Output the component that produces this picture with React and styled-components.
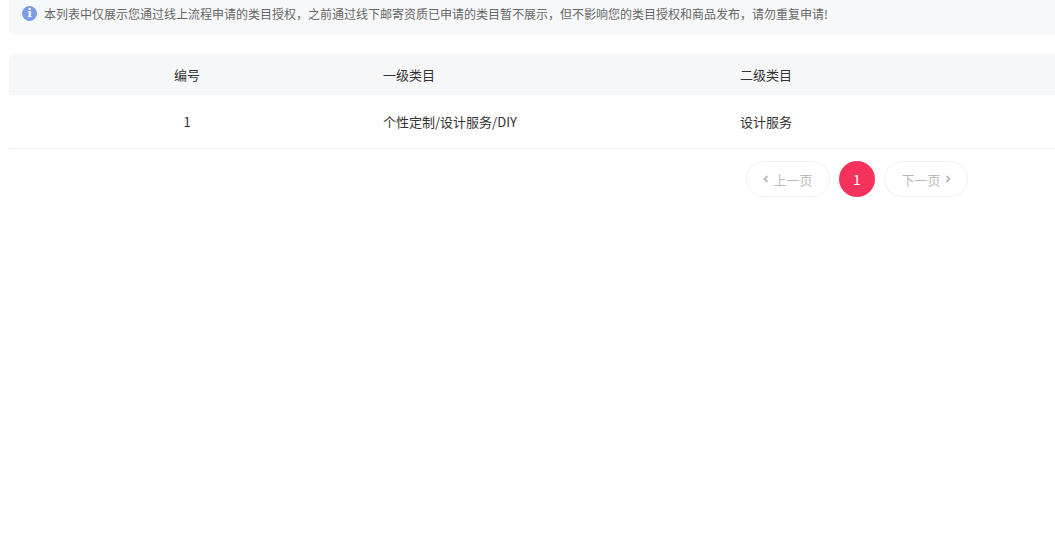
import React from "react";
import styled, { createGlobalStyle } from "styled-components";

const G = createGlobalStyle`
  body{margin:0;background:#fff;font-family:"Noto Sans CJK SC","Noto Sans",sans-serif;overflow:hidden;}
`;
const Page = styled.div`width:1055px;height:539px;padding-left:9px;box-sizing:border-box;overflow:hidden;`;
const Notice = styled.div`
  width:1060px;height:35px;background:#f7f8fa;border-radius:0 0 6px 6px;
  display:flex;align-items:flex-start;padding:6px 0 0 13px;box-sizing:border-box;
  font-size:12px;color:#666;gap:7px;line-height:16px;
`;
const Info = styled.span`
  width:15px;height:15px;border-radius:50%;background:#7c9ee0;color:#fff;font-size:11px;
  display:inline-flex;align-items:center;justify-content:center;font-family:"DejaVu Serif",serif;font-weight:bold;flex:none;
`;
const Table = styled.div`margin-top:19px;width:1060px;`;
const Row = styled.div`
  display:grid;grid-template-columns:356px 357px 1fr;align-items:center;
  height:${p=>p.$h}px;background:${p=>p.$head?"#f6f7f9":"#fff"};
  border-bottom:${p=>p.$head?"none":"1px solid #f0f0f0"};font-size:13px;color:#333;
  border-radius:${p=>p.$head?"6px 6px 0 0":"0"};
`;
const Cell = styled.div`text-align:${p=>p.$c?"center":"left"};padding-left:${p=>p.$c?"0":"18px"};`;
const Pager = styled.div`display:flex;gap:9px;margin:12px 0 0 737px;`;
const Btn = styled.div`
  height:34px;width:82px;border:1px solid #eee;border-radius:18px;display:flex;align-items:center;justify-content:center;
  font-size:13px;color:#bbb;gap:4px;
`;
const Cur = styled.div`width:36px;height:36px;border-radius:50%;background:#f5325c;color:#fff;display:flex;align-items:center;justify-content:center;font-size:14px;`;
const Arrow = ({r}) => <svg width="6" height="8" viewBox="0 0 6 8"><path d={r?"M1.5 1l3 3-3 3":"M4.5 1l-3 3 3 3"} stroke="#bbb" strokeWidth="1.8" fill="none"/></svg>;

export default function App(){
  return <Page><G/>
    <Notice><Info>i</Info>本列表中仅展示您通过线上流程申请的类目授权，之前通过线下邮寄资质已申请的类目暂不展示，但不影响您的类目授权和商品发布，请勿重复申请!</Notice>
    <Table>
      <Row $head $h={41}><Cell $c>编号</Cell><Cell>一级类目</Cell><Cell>二级类目</Cell></Row>
      <Row $h={53}><Cell $c>1</Cell><Cell>个性定制/设计服务/DIY</Cell><Cell>设计服务</Cell></Row>
    </Table>
    <Pager><Btn><Arrow/>上一页</Btn><Cur>1</Cur><Btn>下一页<Arrow r/></Btn></Pager>
  </Page>;
}
